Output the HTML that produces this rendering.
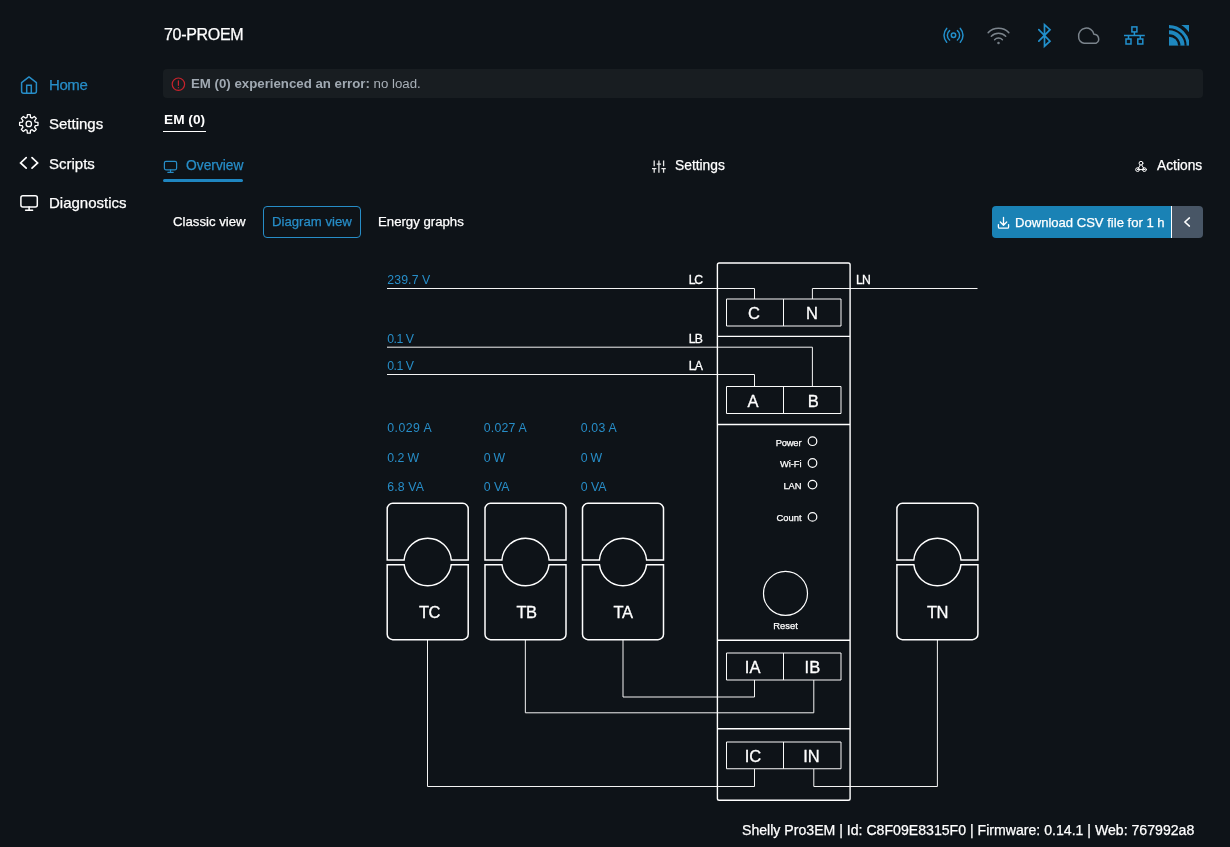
<!DOCTYPE html>
<html lang="en">
<head>
<meta charset="utf-8">
<title>70-PROEM</title>
<style>
*{box-sizing:border-box;margin:0;padding:0}
html,body{width:1230px;height:847px;overflow:hidden;background:#0e1318;color:#fff;font-family:"Liberation Sans",sans-serif;}
.abs{position:absolute;white-space:nowrap}
div.abs{will-change:transform;-webkit-text-stroke:0.25px}
#alerttxt,#emtab{-webkit-text-stroke:0}
svg{will-change:transform}
#title{left:163.5px;top:25.7px;font-size:16px;letter-spacing:-0.3px;line-height:18px;color:#fff}
.nav{left:49px;font-size:15px;line-height:18px;color:#fff}
.nav.active{color:#278dc7}
svg{position:absolute;overflow:visible}
#alert{left:163px;top:69px;width:1040px;height:29px;background:#181d21;border-radius:4px}
#alerttxt{left:191px;top:76.3px;font-size:13.25px;line-height:15px;color:#a9b1b9}
#alerttxt b{font-weight:bold;color:#a0a9b2}
#emtab{left:163.5px;top:112px;font-size:13.7px;line-height:15px;font-weight:bold;color:#fff}
#emline{left:163px;top:131px;width:42.7px;height:1.2px;background:#fff}
.tab{font-size:13.8px;line-height:15px;color:#fff;top:157.8px}
.tab.active{color:#278dc7}
#ovline{left:163px;top:179px;width:80px;height:3px;background:#1f86c0;border-radius:2px}
.vbtn{font-size:13.2px;line-height:15px;top:214px;color:#fff}
#dv{left:263px;top:206px;width:98px;height:32px;border:1px solid #278dc7;border-radius:4px}
#dl{left:992px;top:206px;width:180px;height:32px;background:#1a82b5;border-radius:4px 0 0 4px;border-right:1.2px solid #fff}
#dl2{left:1172px;top:206px;width:31px;height:32px;background:#485666;border-radius:0 4px 4px 0}
#dltxt{left:1015.3px;top:215px;font-size:13.07px;line-height:15px;color:#fff}
#footer{right:35.6px;top:821.9px;font-size:14.12px;line-height:16px;color:#fff}
</style>
</head>
<body>
<div class="abs" id="title">70-PROEM</div>

<div class="abs nav active" style="top:75.7px;letter-spacing:-0.4px">Home</div>
<div class="abs nav" style="top:115px">Settings</div>
<div class="abs nav" style="top:154.8px">Scripts</div>
<div class="abs nav" style="top:194.2px">Diagnostics</div>

<div class="abs" id="alert"></div>
<div class="abs" id="alerttxt"><b>EM (0) experienced an error:</b> no load.</div>

<div class="abs" id="emtab">EM (0)</div>
<div class="abs" id="emline"></div>

<div class="abs tab active" style="left:186px">Overview</div>
<div class="abs" id="ovline"></div>
<div class="abs tab" style="left:674.6px">Settings</div>
<div class="abs tab" style="left:1156.5px">Actions</div>

<div class="abs vbtn" style="left:172.6px">Classic view</div>
<div class="abs" id="dv"></div>
<div class="abs vbtn" style="left:272.3px;color:#278dc7">Diagram view</div>
<div class="abs vbtn" style="left:378.4px">Energy graphs</div>

<div class="abs" id="dl"></div>
<div class="abs" id="dl2"></div>
<div class="abs" id="dltxt">Download CSV file for 1 h</div>

<!--ICONS-->
<svg id="icons" style="left:0;top:0" width="1230" height="260" viewBox="0 0 1230 260" fill="none" stroke-linecap="round" stroke-linejoin="round">
<!-- sidebar: home -->
<g stroke="#278dc7" stroke-width="1.5">
<path d="M21.6,82.6L29,76.9L36.4,82.6V91.3a2,2 0 0 1 -2,2H23.6a2,2 0 0 1 -2,-2Z"/>
<path d="M26.7,93.3V85.3H31.3V93.3" stroke-linejoin="miter"/>
</g>
<!-- sidebar: gear -->
<g stroke="#fff" stroke-width="1.3" transform="translate(28.8,123.9)">
<path d="M-1.73,-6.47L-1.45,-9.19L1.45,-9.19L1.73,-6.47L3.35,-5.80L5.47,-7.52L7.52,-5.47L5.80,-3.35L6.47,-1.73L9.19,-1.45L9.19,1.45L6.47,1.73L5.80,3.35L7.52,5.47L5.47,7.52L3.35,5.80L1.73,6.47L1.45,9.19L-1.45,9.19L-1.73,6.47L-3.35,5.80L-5.47,7.52L-7.52,5.47L-5.80,3.35L-6.47,1.73L-9.19,1.45L-9.19,-1.45L-6.47,-1.73L-5.80,-3.35L-7.52,-5.47L-5.47,-7.52L-3.35,-5.80Z"/>
<circle cx="0" cy="0" r="2.7"/>
</g>
<!-- sidebar: code -->
<g stroke="#fff" stroke-width="1.7" stroke-linejoin="miter">
<path d="M26.2,157.7L20.6,162.9L26.2,168.1"/>
<path d="M32,157.7L37.6,162.9L32,168.1"/>
</g>
<!-- sidebar: monitor -->
<g stroke="#fff" stroke-width="1.5">
<rect x="20.9" y="195.8" width="16.4" height="11.2" rx="2"/>
<path d="M29.1,207V210.3M25.6,210.3H32.6"/>
</g>
<!-- alert icon -->
<g stroke="#c8232c" stroke-width="1.2">
<circle cx="178.4" cy="84.2" r="6.2"/>
<path d="M178.4,80.8V85.3M178.4,87.5V87.7"/>
</g>
<!-- overview monitor -->
<g stroke="#278dc7" stroke-width="1.2">
<rect x="164.4" y="161.4" width="12.2" height="8.4" rx="1.5"/>
<path d="M170.5,169.8V172.3M167.8,172.3H173.2"/>
</g>
<!-- sliders -->
<g stroke="#e8e8e8" stroke-width="1.3" stroke-linecap="butt">
<path d="M654.2,160.4V166.3M654.2,168.7V172.8M652,168.7H656.4"/>
<path d="M658.9,160.4V164M658.9,164V172.8M656.7,164.2H661.1" />
<path d="M663.6,160.4V166.3M663.6,168.7V172.8M661.4,168.7H665.8"/>
</g>
<!-- actions (webhook) -->
<g stroke="#fff" stroke-width="1">
<circle cx="1141" cy="163.2" r="1.9"/>
<circle cx="1137.6" cy="169.6" r="1.9"/>
<circle cx="1144.4" cy="169.6" r="1.9"/>
<path d="M1140.2,165L1137.6,169.6M1141.8,165L1144.4,169.6M1137.6,169.6H1144.4"/>
</g>
<!-- download icon -->
<g stroke="#fff" stroke-width="1.3">
<path d="M1003.5,217.3V225M1000.3,222L1003.5,225.2L1006.7,222"/>
<path d="M998.4,224.6V227a1.2,1.2 0 0 0 1.2,1.2H1007.4a1.2,1.2 0 0 0 1.2,-1.2V224.6"/>
</g>
<!-- chevron -->
<path d="M1189.4,217.9L1184.9,222L1189.4,226.1" stroke="#fff" stroke-width="1.5" stroke-linejoin="miter"/>
<!-- top icons: broadcast -->
<g stroke="#2290cc" stroke-width="1.5">
<circle cx="953.5" cy="35.3" r="2.2"/>
<path d="M949.6,30.6A6,6 0 0 0 949.6,40M957.4,30.6A6,6 0 0 1 957.4,40"/>
<path d="M946.7,28.4A10.2,10.2 0 0 0 946.7,42.2M960.3,28.4A10.2,10.2 0 0 1 960.3,42.2"/>
</g>
<!-- wifi -->
<g stroke="#7b848c" stroke-width="1.5">
<path d="M988.2,32.6A14.6,14.6 0 0 1 1008.8,32.6"/>
<path d="M991.3,36.2A10.2,10.2 0 0 1 1005.7,36.2"/>
<path d="M994.6,39.7A5.5,5.5 0 0 1 1002.4,39.7"/>
<circle cx="998.5" cy="43" r="0.5" fill="#7b848c"/>
</g>
<!-- bluetooth -->
<path d="M1038.8,29.7L1050,41.1L1044.5,46.2V24.6L1050,29.7L1038.8,41.1" stroke="#2290cc" stroke-width="1.7" stroke-linejoin="miter"/>
<!-- cloud -->
<path d="M1084,43.2H1096.2A4.8,4.8 0 0 0 1093.86,34.21A7.7,7.7 0 0 0 1078.67,36.6A6.2,6.2 0 0 0 1084,43.2Z" stroke="#7b848c" stroke-width="1.5"/>
<!-- lan -->
<g stroke="#2290cc" stroke-width="1.5" stroke-linejoin="miter" stroke-linecap="butt">
<rect x="1131.9" y="26.9" width="5" height="5"/>
<rect x="1126" y="39" width="5" height="5"/>
<rect x="1137.8" y="39" width="5" height="5"/>
<path d="M1124,35.5H1144.8M1134.4,31.9V35.5M1128.5,35.5V39M1140.3,35.5V39"/>
</g>
<!-- cast -->
<g>
<clipPath id="cc"><rect x="1169" y="25" width="20" height="20.8"/></clipPath>
<g clip-path="url(#cc)">
<rect x="1169" y="25" width="20" height="20.8" fill="#1e88bf" stroke="none"/>
<circle cx="1169" cy="45.8" r="10.3" stroke="#0e1318" stroke-width="2.3"/>
<circle cx="1169" cy="45.8" r="16.6" stroke="#0e1318" stroke-width="2.1"/>
<circle cx="1169" cy="45.8" r="22.4" stroke="#0e1318" stroke-width="3.4"/>
</g>
</g>
</svg>
<!--/ICONS-->
<!--DIAGRAM-->
<svg id="diagram" style="left:0;top:0" width="1230" height="847" viewBox="0 0 1230 847" fill="none">
<g stroke="#f4f4f4" stroke-width="1" shape-rendering="auto">
<path d="M387,288.5H754.5V299"/>
<path d="M812.4,299V288.5H977.5"/>
<path d="M387,347.2H812.4V386.5"/>
<path d="M387,374.5H754.5V386.5"/>
<path d="M623,640V697H754.5V680"/>
<path d="M525.35,640V712.8H813.8V680"/>
<path d="M427.5,640V786.5H754.5V769"/>
<path d="M937.4,640V786.5H813.8V769"/>
</g>
<g stroke="#fff" stroke-width="1.4">
<rect x="717.4" y="263" width="132.7" height="537.2" rx="1.8"/>
<path d="M717.4,336.4H850M717.4,424.5H850M717.4,640.2H850M717.4,728.8H850"/>
</g>
<g stroke="#fafafa" stroke-width="1">
<path d="M726.5,299H841V326H726.5ZM783.5,299V326"/>
<path d="M726.5,386.5H841V413.5H726.5ZM783.5,386.5V413.5"/>
<path d="M726.5,653H841V680H726.5ZM783.5,653V680"/>
<path d="M726.5,742H841V768.75H726.5ZM783.5,742V768.75"/>
</g>
<g stroke="#fff" stroke-width="1.2">
<circle cx="812.5" cy="441.2" r="4.3"/>
<circle cx="812.5" cy="463" r="4.3"/>
<circle cx="812.5" cy="484.6" r="4.3"/>
<circle cx="812.5" cy="516.9" r="4.3"/>
<circle cx="785.5" cy="593.4" r="22"/>
</g>
<defs>
<g id="clamp" stroke="#fff" stroke-width="1.5">
<path d="M0,56.7V5.5a5.5,5.5 0 0 1 5.5,-5.5H75.5a5.5,5.5 0 0 1 5.5,5.5V56.7H64.12A23.7,23.7 0 0 0 16.88,56.7Z"/>
<path d="M0,61.4H16.95A23.7,23.7 0 0 0 64.05,61.4H81V130.9a5.5,5.5 0 0 1 -5.5,5.5H5.5a5.5,5.5 0 0 1 -5.5,-5.5Z"/>
</g>
</defs>
<use href="#clamp" x="387.2" y="503.3"/>
<use href="#clamp" x="485" y="503.3"/>
<use href="#clamp" x="582.5" y="503.3"/>
<use href="#clamp" x="896.9" y="503.3"/>
<g fill="#fff" stroke="#fff" stroke-width="0.3" font-family="'Liberation Sans',sans-serif" font-size="16.5" text-anchor="middle">
<text x="429.7" y="617.8" textLength="21.3">TC</text>
<text x="526.8" y="617.8" textLength="20.6">TB</text>
<text x="623.3" y="617.8" textLength="19.5">TA</text>
<text x="937.7" y="617.8" textLength="21.3">TN</text>
<text x="754" y="319">C</text>
<text x="812" y="319">N</text>
<text x="753" y="406.6">A</text>
<text x="813.3" y="406.6">B</text>
<text x="752.6" y="672.9">IA</text>
<text x="812.4" y="672.9">IB</text>
<text x="753" y="761.9">IC</text>
<text x="811.4" y="761.9">IN</text>
</g>
<g fill="#fff" stroke="#fff" stroke-width="0.3" font-family="'Liberation Sans',sans-serif" font-size="12.2">
<text x="703" y="284.1" text-anchor="end" textLength="14.2">LC</text>
<text x="703" y="342.5" text-anchor="end" textLength="14.2">LB</text>
<text x="703" y="369.6" text-anchor="end" textLength="14.2">LA</text>
<text x="856" y="284.1" textLength="14.8">LN</text>
</g>
<g fill="#fff" stroke="#fff" stroke-width="0.25" font-family="'Liberation Sans',sans-serif" font-size="9.4" text-anchor="end">
<text x="801.5" y="446" textLength="25.8">Power</text>
<text x="801.5" y="466.8" textLength="21.5">Wi-Fi</text>
<text x="801.5" y="488.9" textLength="18">LAN</text>
<text x="801.5" y="520.9" textLength="25">Count</text>
<text x="785.5" y="628.9" text-anchor="middle" textLength="24.5">Reset</text>
</g>
<g fill="#278dc7" font-family="'Liberation Sans',sans-serif" font-size="12.3">
<text x="387.3" y="284.1" textLength="43">239.7 V</text>
<text x="387.3" y="342.5" textLength="26.6">0.1 V</text>
<text x="387.3" y="369.6" textLength="26.6">0.1 V</text>
<text x="387.3" y="432.4" textLength="44.4">0.029 A</text>
<text x="387.3" y="462" textLength="31.8">0.2 W</text>
<text x="387.3" y="491.2" textLength="36.6">6.8 VA</text>
<text x="483.7" y="432.4" textLength="43.1">0.027 A</text>
<text x="483.7" y="462" textLength="21.5">0 W</text>
<text x="483.7" y="491.2" textLength="25.8">0 VA</text>
<text x="580.7" y="432.4" textLength="35.9">0.03 A</text>
<text x="580.7" y="462" textLength="21.5">0 W</text>
<text x="580.7" y="491.2" textLength="25.8">0 VA</text>
</g>
</svg>
<!--/DIAGRAM-->

<div class="abs" id="footer">Shelly Pro3EM | Id: C8F09E8315F0 | Firmware: 0.14.1 | Web: 767992a8</div>
</body>
</html>
